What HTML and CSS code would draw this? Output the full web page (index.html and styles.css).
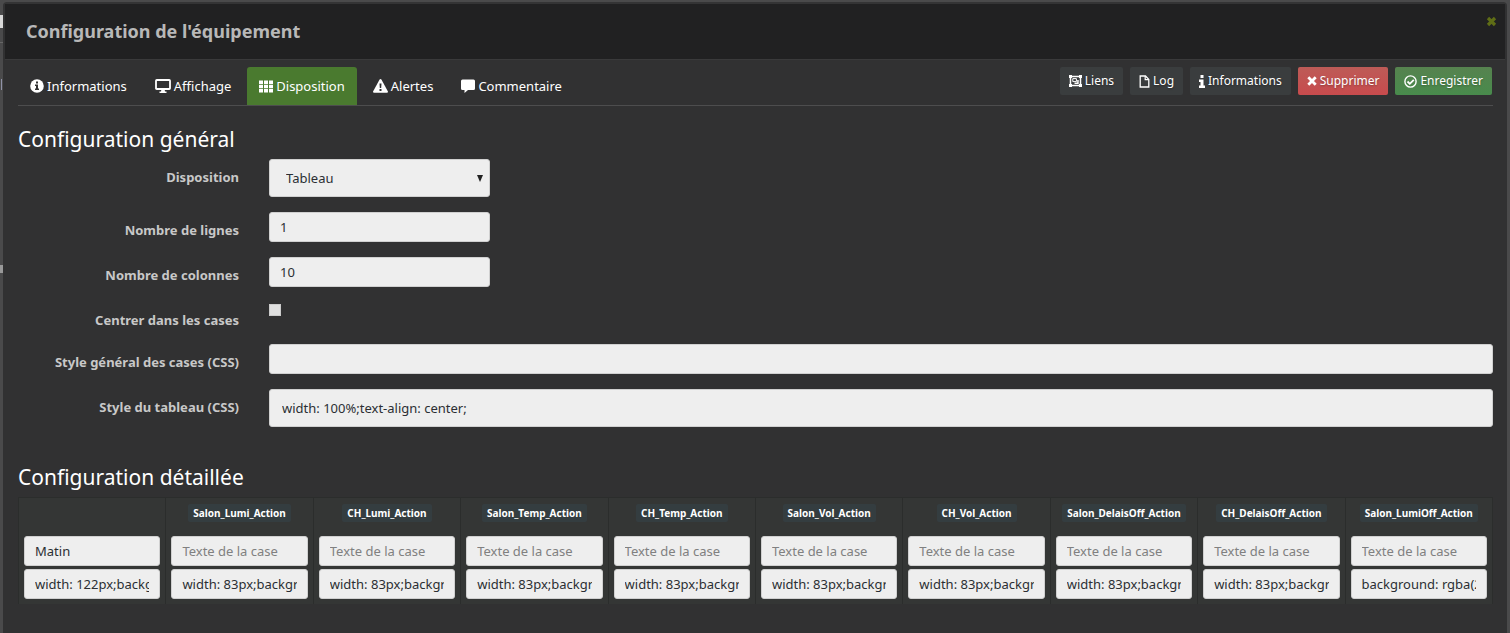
FILE: index.html
```
<!DOCTYPE html>
<html lang="fr">
<head>
  <meta charset="UTF-8">
  <title>Configuration de l'équipement</title>
  <link rel="stylesheet" href="styles.css">
</head>
<body>
  <div class="dialog">
    <header class="dialog-title">
      <h1>Configuration de l'équipement</h1>
      <button class="close" type="button" aria-label="Fermer">
        <svg width="11" height="11" viewBox="0 0 11 11"><path d="M2 2l7 7M9 2l-7 7" stroke="currentColor" stroke-width="3.2"/></svg>
      </button>
    </header>

    <main class="dialog-content">
      <div class="toolbar">
        <nav class="tabs">
          <a href="#informations"><svg width="14" height="14" viewBox="0 0 14 14"><circle cx="7" cy="7" r="6.8" fill="#fff"/><path d="M6 2.6h2v1.8H6zM5 5.6h3v4h1v1.3H5V9.6h1V6.9H5z" fill="#313132"/></svg>Informations</a>
          <a href="#affichage"><svg width="16" height="14" viewBox="0 0 16 14"><path d="M1.8 1h12.4q.8 0 .8.8v7.4q0 .8-.8.8H1.8q-.8 0-.8-.8V1.8Q1 1 1.8 1z" fill="none" stroke="#fff" stroke-width="1.8"/><path d="M6.5 10h3l.5 2.4h1.5V14h-7v-1.6H6z" fill="#fff"/></svg>Affichage</a>
          <a href="#disposition" class="active"><svg width="14" height="13" viewBox="0 0 14 13"><path d="M0 .5h4v3.4H0zM5 .5h4v3.4H5zM10 .5h4v3.4h-4zM0 4.8h4v3.4H0zM5 4.8h4v3.4H5zM10 4.8h4v3.4h-4zM0 9.1h4v3.4H0zM5 9.1h4v3.4H5zM10 9.1h4v3.4h-4z" fill="#fff"/></svg>Disposition</a>
          <a href="#alertes"><svg width="15" height="14" viewBox="0 0 15 14"><path d="M7.5 0q.6 0 .9.5l6.4 11.8q.6 1.4-.9 1.4H1.1q-1.5 0-.9-1.4L6.6.5Q6.9 0 7.5 0z" fill="#fff"/><path d="M6.5 4.5h2l-.3 4.5H6.8zM6.5 10h2v2h-2z" fill="#313132"/></svg>Alertes</a>
          <a href="#commentaire"><svg width="14" height="14" viewBox="0 0 14 14"><path d="M1.5.5h11Q14 .5 14 2v7.5q0 1.5-1.5 1.5H7l-3.5 3v-3h-2Q0 11 0 9.5V2Q0 .5 1.5.5z" fill="#fff"/></svg>Commentaire</a>
        </nav>
        <div class="actions">
          <button type="button" class="btn"><svg width="13" height="12" viewBox="0 0 13 12"><path d="M1.5 1.5h10v9h-10z" fill="none" stroke="#fff" stroke-width="1.5"/><path d="M0 0h3v3H0zM10 0h3v3h-3zM0 9h3v3H0zM10 9h3v3h-3z" fill="#fff"/><path d="M3.8 3.6h3.6v3H3.8z" fill="none" stroke="#fff" stroke-width="1"/><path d="M8.200 5h1.500v3.900H5.500V7.500h2.700z" fill="#fff"/></svg>Liens</button>
          <button type="button" class="btn"><svg width="11" height="13" viewBox="0 0 11 13"><path d="M1.2 1h5.3l3.3 3.4V12H1.2z" fill="none" stroke="#fff" stroke-width="1.3"/><path d="M6.2 1v3.7h3.6" fill="none" stroke="#fff" stroke-width="1.2"/></svg>Log</button>
          <button type="button" class="btn"><svg width="6" height="13" viewBox="0 0 6 13"><path d="M1.500 0h3v3h-3zM0 4.500h4.500v6H6V13H0v-2.500h1.500V7H0z" fill="#fff"/></svg>Informations</button>
          <button type="button" class="btn btn-danger"><svg width="10" height="10" viewBox="0 0 10 10"><path d="M1.3 1.3l7.4 7.4M8.7 1.3L1.3 8.7" stroke="#fff" stroke-width="2.8"/></svg>Supprimer</button>
          <button type="button" class="btn btn-success"><svg width="13" height="13" viewBox="0 0 13 13"><circle cx="6.5" cy="6.5" r="5.6" fill="none" stroke="#fff" stroke-width="1.4"/><path d="M3.5 6.5l2.300 2.300 4-4" fill="none" stroke="#fff" stroke-width="1.800"/></svg>Enregistrer</button>
        </div>
      </div>

      <h2>Configuration général</h2>
      <form class="settings">
        <div class="form-row">
          <label for="layout">Disposition</label>
          <div class="select-wrap">
            <select id="layout" class="field tall">
              <option>Tableau</option>
              <option>Défaut</option>
            </select>
            <svg class="arrow" width="6" height="7" viewBox="0 0 6 7"><path d="M0 0h6L3 7z" fill="#222"/></svg>
          </div>
        </div>
        <div class="form-row">
          <label for="lines">Nombre de lignes</label>
          <input id="lines" class="field short" type="text" value="1">
        </div>
        <div class="form-row">
          <label for="columns">Nombre de colonnes</label>
          <input id="columns" class="field short" type="text" value="10">
        </div>
        <div class="form-row">
          <label for="center">Centrer dans les cases</label>
          <input id="center" class="check" type="checkbox">
        </div>
        <div class="form-row">
          <label for="cell-style">Style général des cases (CSS)</label>
          <input id="cell-style" class="field" type="text">
        </div>
        <div class="form-row">
          <label for="table-style">Style du tableau (CSS)</label>
          <input id="table-style" class="field tall" type="text" value="width: 100%;text-align: center;">
        </div>
      </form>

      <h2>Configuration détaillée</h2>
      <table class="cells">
        <thead>
          <tr>
            <td></td>
            <th><span>Salon_Lumi_Action</span></th>
            <th><span>CH_Lumi_Action</span></th>
            <th><span>Salon_Temp_Action</span></th>
            <th><span>CH_Temp_Action</span></th>
            <th><span>Salon_Vol_Action</span></th>
            <th><span>CH_Vol_Action</span></th>
            <th><span>Salon_DelaisOff_Action</span></th>
            <th><span>CH_DelaisOff_Action</span></th>
            <th><span>Salon_LumiOff_Action</span></th>
          </tr>
        </thead>
        <tbody>
          <tr>
            <td><input class="field" aria-label="Texte 1" value="Matin"><input class="field" aria-label="Style 1" value="width: 122px;background: none;"></td>
            <td><input class="field" aria-label="Texte 2" placeholder="Texte de la case"><input class="field" aria-label="Style 2" value="width: 83px;background: none;"></td>
            <td><input class="field" aria-label="Texte 3" placeholder="Texte de la case"><input class="field" aria-label="Style 3" value="width: 83px;background: none;"></td>
            <td><input class="field" aria-label="Texte 4" placeholder="Texte de la case"><input class="field" aria-label="Style 4" value="width: 83px;background: none;"></td>
            <td><input class="field" aria-label="Texte 5" placeholder="Texte de la case"><input class="field" aria-label="Style 5" value="width: 83px;background: none;"></td>
            <td><input class="field" aria-label="Texte 6" placeholder="Texte de la case"><input class="field" aria-label="Style 6" value="width: 83px;background: none;"></td>
            <td><input class="field" aria-label="Texte 7" placeholder="Texte de la case"><input class="field" aria-label="Style 7" value="width: 83px;background: none;"></td>
            <td><input class="field" aria-label="Texte 8" placeholder="Texte de la case"><input class="field" aria-label="Style 8" value="width: 83px;background: none;"></td>
            <td><input class="field" aria-label="Texte 9" placeholder="Texte de la case"><input class="field" aria-label="Style 9" value="width: 83px;background: none;"></td>
            <td><input class="field" aria-label="Texte 10" placeholder="Texte de la case"><input class="field" aria-label="Style 10" value="background: rgba(255,255,255,0);"></td>
          </tr>
        </tbody>
      </table>
    </main>
  </div>
</body>
</html>
```
FILE: styles.css
```
* {
  box-sizing: border-box;
}

/* dimmed page behind the dialog, only its edges stay visible */
body {
  margin: 0;
  padding: 2px 3px 0;
  min-height: 100vh;
  display: flex;
  background:
    linear-gradient(#d8d8d8, #d8d8d8) 0 15px / 3px 13px no-repeat,
    linear-gradient(#666, #666) 0 42px / 3px 1px no-repeat,
    linear-gradient(#8f92a8, #8f92a8) 1px 79px / 1px 11px no-repeat,
    linear-gradient(#999, #999) 0 265px / 3px 8px no-repeat,
    #4a4a4b;
  color: #fff;
  font-family: "Noto Sans", sans-serif;
  font-size: 13px;
  line-height: 18px;
}

button, input, select {
  font: inherit;
}

.dialog {
  flex: 1;
  min-width: 0;
  background: #313132;
  border-top: 2px solid #343435;
  border-radius: 4px 4px 0 0;
}

.dialog-title {
  display: flex;
  justify-content: space-between;
  align-items: flex-start;
  height: 56px;
  margin: 0 2px;
  padding: 15px 8px 0 21px;
  background: #212122;
  border-bottom: 1px solid #3a3a3b;
}

.dialog-title h1 {
  margin: 0;
  font-size: 18px;
  line-height: 25px;
  color: #b8b8b8;
}

.close {
  display: flex;
  margin-top: -3px;
  padding: 0;
  border: 0;
  background: none;
  color: #5f6d16;
}

.dialog-content {
  padding: 7px 14px 0 15px;
}

.toolbar {
  display: flex;
  justify-content: space-between;
  align-items: flex-start;
  border-bottom: 1px solid #4d4d4e;
}

.tabs {
  display: flex;
  gap: 4px;
}

.tabs a {
  display: flex;
  align-items: center;
  gap: 3px;
  padding: 10px 12px;
  border-radius: 3px 3px 0 0;
  color: #fff;
  text-decoration: none;
}

.tabs a.active {
  background: #4a7a2f;
}

.actions {
  display: flex;
  gap: 7px;
  padding-right: 1px;
}

.btn {
  display: flex;
  align-items: center;
  gap: 3px;
  height: 28px;
  padding: 0 9px;
  border: 0;
  border-radius: 2px;
  background: #3a3d3e;
  color: #fff;
  font-size: 12px;
  text-shadow: 0 1px 2px rgba(0, 0, 0, 0.3);
}

.btn-danger {
  background: linear-gradient(#bd5b57, #c84b4d);
}

.btn-success {
  background: linear-gradient(#56824f, #488b4c);
}

h2 {
  margin: 19px 0 5px;
  font-size: 21px;
  line-height: 29px;
  font-weight: 400;
}

.settings {
  display: flex;
  flex-direction: column;
  gap: 15px;
}

.form-row {
  display: grid;
  grid-template-columns: 221px 1fr;
  column-gap: 30px;
  align-items: start;
}

.form-row label {
  padding-top: 9px;
  color: #c8c8c8;
  font-weight: 700;
  text-align: right;
}

.field {
  display: block;
  width: 100%;
  height: 30px;
  padding: 0 10px;
  border: 1px solid #d0d0d0;
  border-radius: 3px;
  background: #eee;
  color: #2b2e33;
}

.field::placeholder {
  color: #808080;
  opacity: 1;
}

.field.tall {
  height: 38px;
  padding: 0 12px;
}

.field.short,
.select-wrap {
  width: 221px;
}

.select-wrap {
  position: relative;
}

.select-wrap select.field {
  appearance: none;
  padding-left: 16px;
}

.arrow {
  position: absolute;
  top: 16px;
  right: 7px;
  pointer-events: none;
}

.check {
  appearance: none;
  width: 12px;
  height: 12px;
  margin: 2px 0 0;
  border: 1px solid #ccc;
  background: #e0e0e0;
}

.settings + h2 {
  margin-top: 36px;
}

.cells {
  width: 100%;
  table-layout: fixed;
  border-collapse: collapse;
  background: #343635;
}

.cells td,
.cells th {
  padding: 0 5px 5px;
  border: 1px solid #2b2d2c;
}

.cells tr > * {
  border-top-width: 0;
  border-bottom-width: 0;
}

.cells thead th,
.cells thead td {
  height: 38px;
  padding: 5px 0 0;
  border-top-width: 1px;
  vertical-align: top;
}

.cells th span {
  display: inline-block;
  padding: 0 5px;
  border-radius: 2px;
  background: #343d40;
  font-size: 10px;
  line-height: 18px;
}

.cells .field + .field {
  margin-top: 3px;
}
```
